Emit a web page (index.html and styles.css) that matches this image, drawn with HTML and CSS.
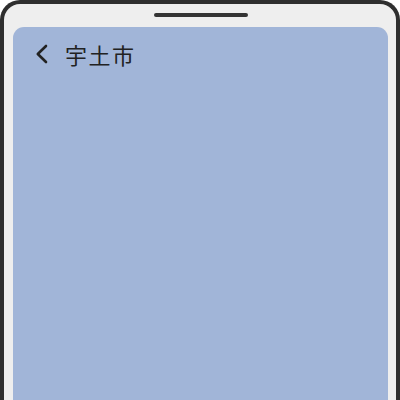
FILE: index.html
```html
<!DOCTYPE html>
<html lang="ja">
<head>
<meta charset="utf-8">
<link rel="stylesheet" href="styles.css">
</head>
<body>
<div class="phone">
  <div class="notch"></div>
  <div class="screen">
    <header class="bar">
      <svg class="back" width="14" height="20" viewBox="0 0 14 20"><polyline points="11,2 2.8,10 11,18" fill="none" stroke="#222" stroke-width="2.6" stroke-linecap="round" stroke-linejoin="round"/></svg>
      <h1 class="title">宇土市</h1>
    </header>
  </div>
</div>
</body>
</html>
```
FILE: styles.css
```css
html, body { margin: 0; padding: 0; background: #ffffff; }
body { width: 400px; height: 400px; overflow: hidden; }
.phone {
  box-sizing: border-box;
  width: 400px;
  height: 400px;
  border: 4px solid #2e2e2e;
  border-bottom: none;
  border-radius: 20px 20px 0 0;
  background: #eeeeee;
  padding: 0 8px 0 9px;
  display: flex;
  flex-direction: column;
}
.notch {
  align-self: center;
  width: 94px;
  height: 4px;
  margin: 9px 0 10px;
  border-radius: 2px;
  background: #333333;
}
.screen {
  flex: 1;
  background: #a1b5d8;
  border-radius: 11px 11px 0 0;
}
.bar {
  display: flex;
  align-items: center;
  height: 54px;
  padding-left: 22px;
}
.back { display: block; margin-right: 16px; }
.title {
  margin: 0;
  font-family: "Noto Sans CJK JP", "Noto Sans", sans-serif;
  font-weight: 400;
  font-size: 22px;
  letter-spacing: 1.5px;
  line-height: 1;
  color: #222222;
}
```
